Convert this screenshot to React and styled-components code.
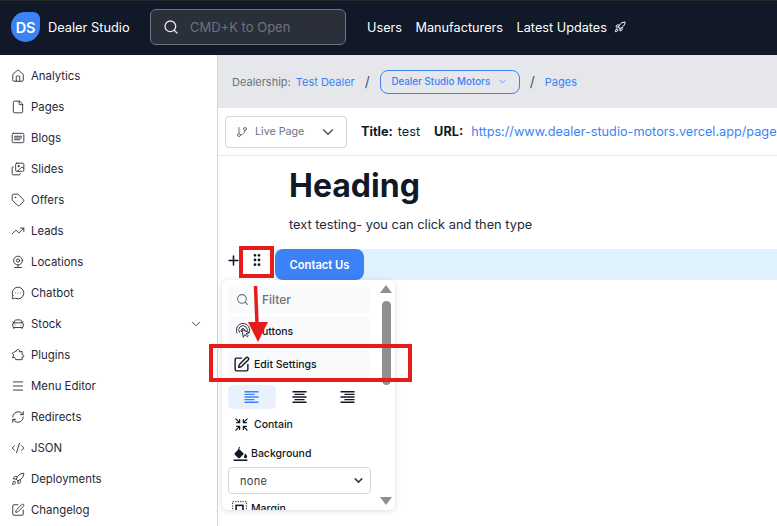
import React from "react";
import styled, { createGlobalStyle } from "styled-components";
import {
  Search, Home, File, Images, Tag, TrendingUp, MessageCircleMore, CarFront, Menu,
  RefreshCw, CodeXml, Rocket, ChevronDown, GitBranch, Plus, GripVertical, SquarePen, Shrink
} from "lucide-react";

const Global = createGlobalStyle`
  html, body { margin: 0; padding: 0; background: #fff; }
  body { font-family: Inter, "Noto Sans", sans-serif; color: #111827; overflow: hidden; }
  * { box-sizing: border-box; }
`;

const Page = styled.div`
  width: 777px; height: 526px; position: relative; overflow: hidden; display: flex; flex-direction: column;
`;
const Header = styled.header`
  height: 55px; flex: none; background: #111827; border-top: 1px solid #26282c; display: flex; align-items: center;
  padding: 0 0 2px 11px; color: #fff;
`;
const LogoMark = styled.div`
  width: 29px; height: 30px; background: #3b82f6; border-radius: 48% 22% 50% 50%; color: #fff; font-size: 14.5px; font-weight: 600;
  display: flex; align-items: center; justify-content: center; letter-spacing: -0.3px;
`;
const Brand = styled.span`
  font-size: 12.8px; margin-left: 8px; width: 102px; white-space: nowrap; color: #fff;
`;
const SearchBox = styled.div`
  width: 196px; height: 36px; border: 1px solid #6b7280; border-radius: 6px; background: #2b2f3a; display: flex; align-items: center;
  padding-left: 12px; gap: 11px; color: #e5e7eb; font-size: 13px;
  span { color: #6b7280; }
`;
const Nav = styled.nav`
  display: flex; align-items: center; gap: 13.5px; margin-left: 21px; font-size: 12.7px;
`;
const NavLink = styled.span`
  display: flex; align-items: center; gap: 7px; color: #fff; white-space: nowrap;
`;
const Body = styled.div`
  flex: 1; display: flex; min-height: 0;
`;
const Sidebar = styled.aside`
  width: 218px; flex: none; border-right: 1px solid #d1d5db; padding: 5px 0 0 11px; background: #fff; overflow: hidden;
`;
const SideRow = styled.div`
  height: 31px; display: flex; align-items: center; gap: 6px; font-size: 11.4px; color: #1f2937; padding-right: 14px;
  span { flex: 1; }
`;
const Main = styled.main`
  flex: 1; min-width: 0; display: flex; flex-direction: column;
`;
const Crumbs = styled.div`
  height: 53px; flex: none; background: #e5e7eb; display: flex; align-items: center; padding-left: 14px; font-size: 11px; color: #6b7280; white-space: nowrap;
`;
const CrumbLink = styled.span`
  color: #3b82f6; margin-left: ${p => p.$ml || 0}px;
`;
const Slash = styled.span`
  color: #4b5563; margin: 0 10px; font-size: 14px;
`;
const DealerPill = styled.span`
  height: 24px; width: 140px; justify-content: center; border: 1px solid #3b82f6; border-radius: 8px; color: #3b82f6; font-size: 9.8px; font-weight: 500; display: flex;
  align-items: center; gap: 7px;
`;
const ToolBar = styled.div`
  height: 48px; flex: none; border-bottom: 1px solid #e5e7eb; display: flex; align-items: center; padding-left: 7px; white-space: nowrap; font-size: 12.7px; overflow: hidden;
`;
const BranchSelect = styled.div`
  width: 122px; height: 32px; flex: none; border: 1px solid #d1d5db; border-radius: 4px; display: flex; align-items: center; padding: 0 9px 0 10px;
  color: #6b7280; font-size: 10.7px; gap: 7px;
  span { flex: 1; }
`;
const Label = styled.b`
  font-weight: 700; margin-left: ${p => p.$ml}px; margin-right: ${p => p.$mr}px; color: #111827;
`;
const Url = styled.span`
  color: #3b82f6;
`;
const Canvas = styled.div`
  flex: 1; position: relative; min-height: 0;
`;
const Heading = styled.h1`
  margin: 8px 0 0 71px; font-size: 32px; line-height: 44px; font-weight: 700; color: #111827;
`;
const Para = styled.p`
  margin: 6px 0 0 71px; font-size: 12.8px; line-height: 22px; color: #1f2937;
`;
const BlockRow = styled.div`
  margin-top: 13px; height: 31px; background: #e0f2fe; margin-left: 57px; display: flex;
`;
const ContactBtn = styled.button`
  width: 89px; height: 31px; border: 0; border-radius: 8px; background: #3b82f6; color: #fff; font: 600 11.2px Inter, sans-serif;
`;
const BlockTools = styled.div`
  position: absolute; left: 8px; top: 96px; display: flex; align-items: center; gap: 8px; color: #111827;
`;
const Popup = styled.div`
  position: absolute; left: 4px; top: 124px; width: 173px; height: 230px; background: #fff; border-radius: 6px; overflow: hidden;
  box-shadow: 0 1px 6px rgba(0,0,0,.14); padding: 5px 0 0 6px;
`;
const MenuRow = styled.div`
  width: 143px; height: 28px; background: #f9fafb; border-radius: 5px; display: flex; align-items: center; gap: 4px; padding-left: ${p => p.$pl || 5}px; margin-bottom: ${p => p.$mb || 4}px;
  font-size: 10.5px; font-weight: 500; color: #111827; white-space: nowrap;
`;
const FilterText = styled.span`
  color: #6b7280; font-size: 12px; margin-left: 9px; font-weight: 500;
`;
const AlignGroup = styled.div`
  display: flex; width: 143px; height: 24px; margin-top: 7px;
`;
const AlignBtn = styled.div`
  flex: 1; display: flex; align-items: center; justify-content: center; border-radius: 5px; background: ${p => p.$on ? "#e8f1fd" : "transparent"}; color: ${p => p.$on ? "#3b82f6" : "#111827"};
`;
const Option = styled.div`
  height: ${p => p.$h}px; display: flex; align-items: center; gap: ${p => p.$gap}px; font-size: 10.5px; font-weight: 500; padding-left: ${p => p.$pl}px; color: #111827; white-space: nowrap;
`;
const FakeSelect = styled.div`
  width: 143px; height: 27px; border: 1px solid #d1d5db; border-radius: 4px; display: flex; align-items: center; justify-content: space-between;
  padding: 0 5px 0 11px; font-size: 11px; letter-spacing: .3px; color: #374151;
`;
const ScrollTrack = styled.div`
  position: absolute; right: 3px; top: 5px; bottom: 0; width: 12px; display: flex; flex-direction: column; align-items: center;
`;
const ArrowUp = styled.div`
  width: 0; height: 0; border-left: 6px solid transparent; border-right: 6px solid transparent; border-bottom: 8px solid #8f8f8f;
`;
const ArrowDown = styled(ArrowUp)`
  border-bottom: 0; border-top: 8px solid #8f8f8f; position: absolute; bottom: 5px;
`;
const Thumb = styled.div`
  width: 9px; height: 84px; background: #8f8f8f; border-radius: 5px; margin-top: 8px;
`;
const RedBox = styled.div`
  position: absolute; border: 4px solid #e61c1c; left: ${p => p.$x}px; top: ${p => p.$y}px; width: ${p => p.$w}px; height: ${p => p.$h}px; pointer-events: none;
`;
const RedArrow = styled.svg`
  position: absolute; left: 240px; top: 280px; pointer-events: none;
`;

const Ic = ({ size = 14, children, sw = 1.5, fill = "none" }) => (
  <svg width={size} height={size} viewBox="0 0 24 24" fill={fill} stroke="currentColor" strokeWidth={sw} strokeLinecap="round" strokeLinejoin="round">{children}</svg>
);
const BlogIcon = p => <Ic {...p}><rect x="2" y="4" width="20" height="16" rx="2" /><path d="M6 9h12M6 12h12M6 15h9" /></Ic>;
const PinIcon = p => <Ic {...p}><circle cx="12" cy="9.5" r="7.5" /><circle cx="12" cy="9.5" r="2.8" /><path d="M12 17v3M6 21.5h12" /></Ic>;
const PluginIcon = p => <Ic {...p}><path d="M9 5c0-4 6-3 5.5 0.5 L14 6.5 L19 6v5l2 1c1.5 1 1 4-1.5 3.5L19 15v5H8l-.5-2c-.5-2.5-4-2.5-5-1L5 12 2 9c2-1 4-1 5-3z" /></Ic>;
const TapIcon = p => <Ic {...p}><path d="M3 15a10 10 0 1 1 18 0" /><path d="M6.5 14a6.5 6.5 0 1 1 11 0" /><path d="M9.5 13a3 3 0 1 1 5 0" /><path d="M10.5 10.5l2 11 2-4 4 3 1.5-1.5-3.5-3 4-1.5z" fill="#f9fafb" /></Ic>;
const AlignIcon = ({ kind }) => {
  const rows = [[14, 3], [10, 7.5], [14, 12], [10, 16.5], [14, 21]];
  return (
    <svg width="15" height="14" viewBox="0 0 15 24" preserveAspectRatio="none" stroke="currentColor" strokeWidth="2.2">
      {rows.map(([w, y]) => {
        const x = kind === "left" ? 0.5 : kind === "right" ? 14.5 - w : 7.5 - w / 2;
        return <line key={y} x1={x} x2={x + w} y1={y} y2={y} />;
      })}
    </svg>
  );
};
const BucketIcon = () => (
  <svg width="15" height="15" viewBox="0 0 24 24" fill="currentColor">
    <path d="M10 1l1.6 1.6-2 2L17.5 12.5 11 19a2 2 0 0 1-2.8 0L3 13.8a2 2 0 0 1 0-2.8L8.2 5.8 8 5.6z" />
    <path d="M20 12c1.6 2.4 2.4 3.8 2.4 5a2.4 2.4 0 0 1-4.8 0c0-1.2.8-2.6 2.4-5z" />
    <rect x="1" y="21.5" width="22" height="2.5" />
  </svg>
);
const MarginIcon = () => (
  <svg width="15" height="15" viewBox="0 0 24 24" fill="none" stroke="currentColor">
    <rect x="1" y="1" width="22" height="22" strokeWidth="1.5" strokeDasharray="2 2" />
    <rect x="6.5" y="7" width="11" height="15" strokeWidth="2.5" />
  </svg>
);

const sideItems = [
  [Home, "Analytics"], [File, "Pages"], [BlogIcon, "Blogs"], [Images, "Slides"], [Tag, "Offers"], [TrendingUp, "Leads"],
  [PinIcon, "Locations"], [MessageCircleMore, "Chatbot"], [CarFront, "Stock", true], [PluginIcon, "Plugins"], [Menu, "Menu Editor"],
  [RefreshCw, "Redirects"], [CodeXml, "JSON"], [Rocket, "Deployments"], [SquarePen, "Changelog"]
];

export default function App() {
  return (
    <Page>
      <Global />
      <Header>
        <LogoMark>DS</LogoMark>
        <Brand>Dealer Studio</Brand>
        <SearchBox><Search size={16} /><span>CMD+K to Open</span></SearchBox>
        <Nav>
          <NavLink>Users</NavLink>
          <NavLink>Manufacturers</NavLink>
          <NavLink>Latest Updates <Rocket size={12} /></NavLink>
        </Nav>
      </Header>
      <Body>
        <Sidebar>
          {sideItems.map(([Icon, label, more]) => (
            <SideRow key={label}>
              <Icon size={14} strokeWidth={1.5} />
              <span>{label}</span>
              {more && <ChevronDown size={14} strokeWidth={1.5} />}
            </SideRow>
          ))}
        </Sidebar>
        <Main>
          <Crumbs>
            Dealership: <CrumbLink $ml={5}>Test Dealer</CrumbLink>
            <Slash>/</Slash>
            <DealerPill>Dealer Studio Motors <ChevronDown size={11} strokeWidth={1.5} /></DealerPill>
            <Slash>/</Slash>
            <CrumbLink>Pages</CrumbLink>
          </Crumbs>
          <ToolBar>
            <BranchSelect>
              <GitBranch size={12} />
              <span>Live Page</span>
              <ChevronDown size={18} strokeWidth={1.5} color="#374151" />
            </BranchSelect>
            <Label $ml={14} $mr={5}>Title:</Label>test
            <Label $ml={14} $mr={8}>URL:</Label>
            <Url>https://www.dealer-studio-motors.vercel.app/pages/test</Url>
          </ToolBar>
          <Canvas>
            <Heading>Heading</Heading>
            <Para>text testing- you can click and then type</Para>
            <BlockRow><ContactBtn>Contact Us</ContactBtn></BlockRow>
            <BlockTools>
              <Plus size={15} strokeWidth={2.5} />
              <GripVertical size={16} strokeWidth={2.2} />
            </BlockTools>
            <Popup>
              <MenuRow $pl={8}><Search size={13} color="#6b7280" /><FilterText>Filter</FilterText></MenuRow>
              <MenuRow $pl={7} $mb={5}><TapIcon size={16} sw={1.3} />Buttons</MenuRow>
              <MenuRow $pl={5}><SquarePen size={17} />Edit Settings</MenuRow>
              <AlignGroup>
                <AlignBtn $on><AlignIcon kind="left" /></AlignBtn>
                <AlignBtn><AlignIcon kind="center" /></AlignBtn>
                <AlignBtn><AlignIcon kind="right" /></AlignBtn>
              </AlignGroup>
              <Option $h={30} $pl={6} $gap={5}><Shrink size={15} />Contain</Option>
              <Option $h={28} $pl={5} $gap={3}><BucketIcon />Background</Option>
              <FakeSelect>none <ChevronDown size={13} strokeWidth={3} /></FakeSelect>
              <Option $h={29} $pl={4} $gap={4}><MarginIcon />Margin</Option>
              <ScrollTrack><ArrowUp /><Thumb /><ArrowDown /></ScrollTrack>
            </Popup>
          </Canvas>
        </Main>
      </Body>
      <RedBox $x={239} $y={246} $w={35} $h={32} />
      <RedBox $x={209} $y={344} $w={203} $h={38} />
      <RedArrow width="30" height="64" viewBox="0 0 30 64">
        <path d="M15.5 6 L17 44" stroke="#e61c1c" strokeWidth="3.5" fill="none" />
        <path d="M8 42 L28 42 L18 62 Z" fill="#e61c1c" />
      </RedArrow>
    </Page>
  );
}
